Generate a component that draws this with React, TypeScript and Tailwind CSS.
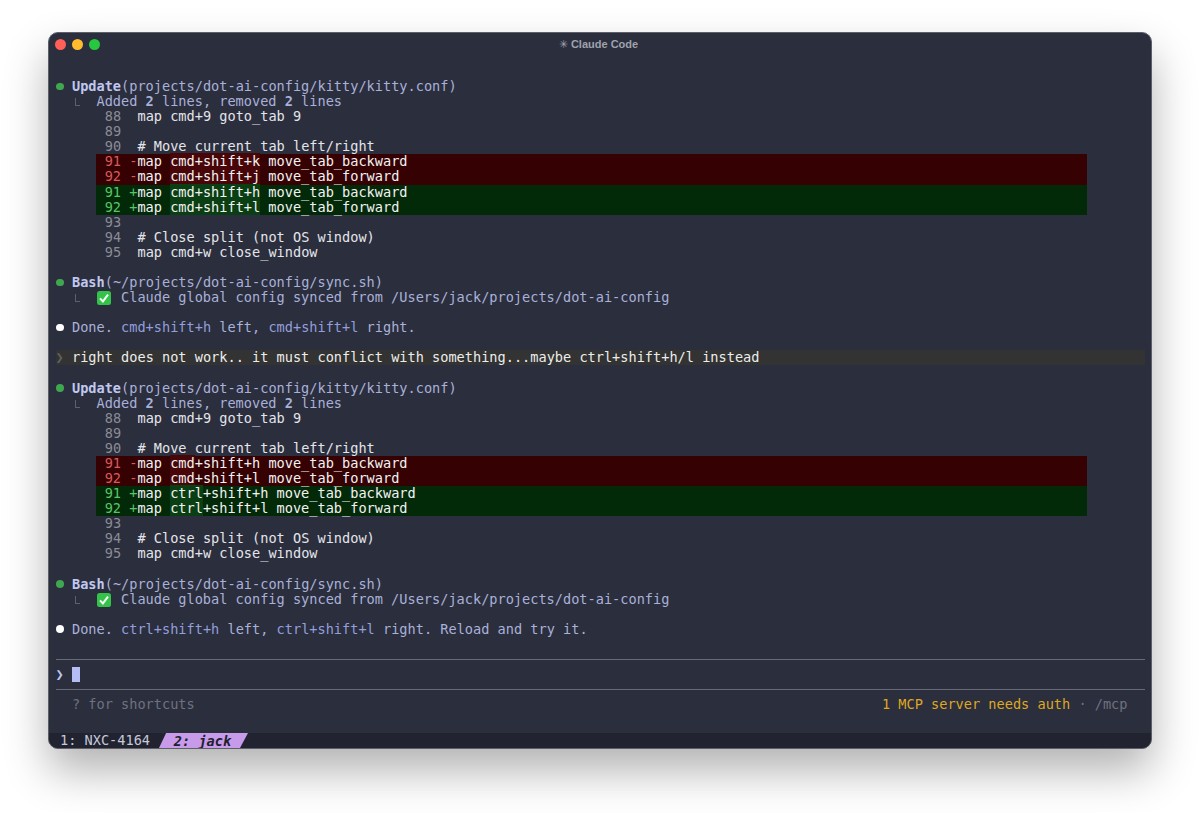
import type { ReactNode } from 'react';

const rowCls = 'h-[15.09px] leading-[15.09px] whitespace-pre';

function Row({ children, className = '' }: { children?: ReactNode; className?: string }) {
  return <div className={`${rowCls} ${className}`}>{children}</div>;
}

function Dot({ white }: { white?: boolean }) {
  return (
    <span className="inline-block w-[16.37px]">
      <span className={`inline-block size-[7.5px] rounded-full ml-[0.5px] mb-[1px] ${white ? 'bg-white' : 'bg-[#3fa84f]'}`} />
    </span>
  );
}

function Corner() {
  return (
    <span className="inline-block w-[40.9px] align-top">
      <span className="block ml-[19px] mt-[4px] w-[5px] h-[8px] border-l border-b border-[#5d606e]" />
    </span>
  );
}

function Tool({ name, arg }: { name: string; arg: string }) {
  return (
    <Row className="text-[#a9b1d9]">
      <Dot />
      <span className="font-bold text-[#c0c8f0]">{name}</span>({arg})
    </Row>
  );
}

function Context({ num, text }: { num: number; text?: string }) {
  return (
    <Row className="text-[#e4e5ea]">
      <span className="text-[#8a8c96]">{`      ${num}`}</span>
      {text ? `  ${text}` : ''}
    </Row>
  );
}

function DiffRow({ type, num, hl, rest, lead = 'map ' }: { type: 'del' | 'add'; num: number; hl: string; rest: string; lead?: string }) {
  const del = type === 'del';
  return (
    <Row className={`ml-[40.9px] w-[991px] text-[#f2f2f2] ${del ? 'bg-[#360102]' : 'bg-[#022a09]'}`}>
      <span className={del ? 'text-[#d9595c]' : 'text-[#58c566]'}>{` ${num} ${del ? '-' : '+'}`}</span>
      {lead}
      <span className={del ? 'bg-[#480608]' : 'bg-[#0a3f13]'}>{hl}</span>
      {rest}
    </Row>
  );
}

function CheckEmoji() {
  return (
    <span className="inline-block w-[16.37px] align-top">
      <svg width="14" height="14" viewBox="0 0 14 14" className="mt-[1px] ml-[1px]">
        <rect width="14" height="14" rx="2.5" fill="#35c24a" />
        <path d="M3 7.4 5.9 10.4 11 3.6" fill="none" stroke="#f4fff4" strokeWidth="2" />
      </svg>
    </span>
  );
}

function UpdateBlock({ diff }: { diff: ReactNode }) {
  return (
    <>
      <Tool name="Update" arg="projects/dot-ai-config/kitty/kitty.conf" />
      <Row className="text-[#a9b1d9]">
        <Corner />
        Added <span className="font-bold">2</span> lines, removed <span className="font-bold">2</span> lines
      </Row>
      <Context num={88} text="map cmd+9 goto_tab 9" />
      <Context num={89} />
      <Context num={90} text="# Move current tab left/right" />
      {diff}
      <Context num={93} />
      <Context num={94} text="# Close split (not OS window)" />
      <Context num={95} text="map cmd+w close_window" />
      <Row />
      <Tool name="Bash" arg="~/projects/dot-ai-config/sync.sh" />
      <Row className="text-[#a9b1d9]">
        <Corner />
        <CheckEmoji />
        {' Claude global config synced from /Users/jack/projects/dot-ai-config'}
      </Row>
      <Row />
    </>
  );
}

export default function App() {
  return (
    <div className="min-h-[813px] bg-white pt-[32px] px-[48px] overflow-hidden">
      <div className="h-[717px] w-[1104px] flex flex-col rounded-[10px] bg-[#2b2e3d] border border-[#5c5e68] overflow-hidden shadow-[0_22px_44px_rgba(0,0,0,0.3)] font-['DejaVu_Sans_Mono',monospace] text-[13.6px]">
        <div className="h-[46px] shrink-0 flex items-start relative">
          <div className="flex gap-[6.5px] pl-[6px] pt-[6px]">
            <span className="size-[10.5px] rounded-full bg-[#fe5f57]" />
            <span className="size-[10.5px] rounded-full bg-[#febc2e]" />
            <span className="size-[10.5px] rounded-full bg-[#27c840]" />
          </div>
          <div className="absolute inset-x-0 top-[3px] pr-[3px] text-center font-['Liberation_Sans',sans-serif] text-[11px] font-bold text-[#9fa2ae]">
            <span className="font-normal">✳</span>{' '} Claude Code
          </div>
        </div>

        <div className="pl-[6.6px] pr-[6px]">
          <UpdateBlock
            diff={
              <>
                <DiffRow type="del" num={91} hl="cmd+shift+k" rest=" move_tab_backward" />
                <DiffRow type="del" num={92} hl="cmd+shift+j" rest=" move_tab_forward" />
                <DiffRow type="add" num={91} hl="cmd+shift+h" rest=" move_tab_backward" />
                <DiffRow type="add" num={92} hl="cmd+shift+l" rest=" move_tab_forward" />
              </>
            }
          />
          <Row className="text-[#a9b1d9]">
            <Dot white />
            Done. <span className="text-[#939fdc]">cmd+shift+h</span> left, <span className="text-[#939fdc]">cmd+shift+l</span> right.
          </Row>
          <Row />
          <Row className="bg-[#323332] text-[#eceded]">
            <span className="text-[#5f615f]">{'❯ '}</span>
            right does not work.. it must conflict with something...maybe ctrl+shift+h/l instead
          </Row>
          <Row />
          <UpdateBlock
            diff={
              <>
                <DiffRow type="del" num={91} hl="cmd" rest="+shift+h move_tab_backward" />
                <DiffRow type="del" num={92} hl="cmd" rest="+shift+l move_tab_forward" />
                <DiffRow type="add" num={91} hl="ctrl" rest="+shift+h move_tab_backward" />
                <DiffRow type="add" num={92} hl="ctrl" rest="+shift+l move_tab_forward" />
              </>
            }
          />
          <Row className="text-[#a9b1d9]">
            <Dot white />
            Done. <span className="text-[#939fdc]">ctrl+shift+h</span> left, <span className="text-[#939fdc]">ctrl+shift+l</span> right. Reload and try it.
          </Row>
          <Row />
          <div className="h-[15.09px] flex items-center">
            <div className="h-px w-full bg-[#676976]" />
          </div>
          <Row className="text-[#c0c8f0] flex items-center">
            <span className="w-[16.37px]">❯</span>
            <span className="w-[8px] h-[15px] bg-[#b4bef5]" />
          </Row>
          <div className="h-[15.09px] flex items-center">
            <div className="h-px w-full bg-[#676976]" />
          </div>
          <Row className="flex justify-between pr-[17.5px] text-[#6f7280]">
            <span>{'  ? for shortcuts'}</span>
            <span>
              <span className="text-[#dfa723]">1 MCP server needs auth</span> · /mcp
            </span>
          </Row>
        </div>

        <div className="mt-auto h-[15px] flex items-center bg-[#212330] leading-[17px]">
          <span className="pl-[11px] w-[110px] text-[#c5c9da] whitespace-pre">1: NXC-4164</span>
          <span className="w-[89px] h-full pr-[2px] bg-[#c79bea] text-[#20202c] italic font-bold text-center [clip-path:polygon(8%_0,100%_0,91%_100%,0_100%)]">2: jack</span>
        </div>
      </div>
    </div>
  );
}
